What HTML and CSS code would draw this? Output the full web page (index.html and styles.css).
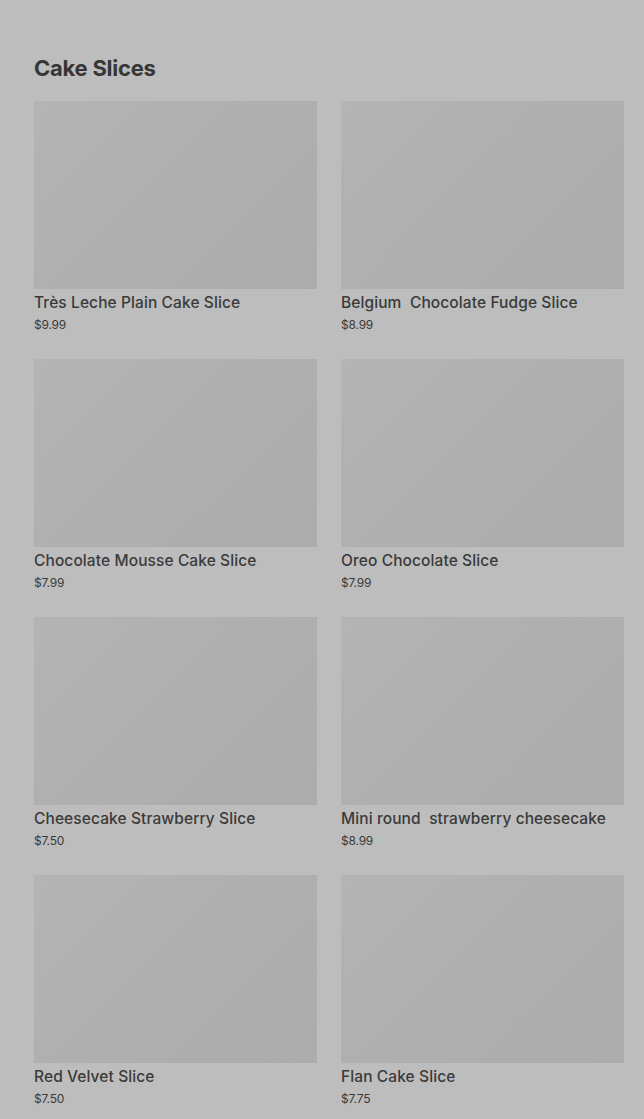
FILE: index.html
```html
<!DOCTYPE html>
<html lang="en">
<head>
<meta charset="UTF-8">
<meta name="viewport" content="width=device-width, initial-scale=1.0">
<title>Cake Slices</title>
<link rel="stylesheet" href="styles.css">
</head>
<body>

<section class="menu-section">
  <h2 class="section-title">Cake Slices</h2>
  <div class="item-grid">
    <div class="item">
      <div class="item-image"></div>
      <div class="item-name">Très Leche Plain Cake Slice</div>
      <div class="item-price">$9.99</div>
    </div>
    <div class="item">
      <div class="item-image"></div>
      <div class="item-name">Belgium&nbsp; Chocolate Fudge Slice</div>
      <div class="item-price">$8.99</div>
    </div>
    <div class="item">
      <div class="item-image"></div>
      <div class="item-name">Chocolate Mousse Cake Slice</div>
      <div class="item-price">$7.99</div>
    </div>
    <div class="item">
      <div class="item-image"></div>
      <div class="item-name">Oreo Chocolate Slice</div>
      <div class="item-price">$7.99</div>
    </div>
    <div class="item">
      <div class="item-image"></div>
      <div class="item-name">Cheesecake Strawberry Slice</div>
      <div class="item-price">$7.50</div>
    </div>
    <div class="item">
      <div class="item-image"></div>
      <div class="item-name">Mini round&nbsp; strawberry cheesecake</div>
      <div class="item-price">$8.99</div>
    </div>
    <div class="item">
      <div class="item-image"></div>
      <div class="item-name">Red Velvet Slice</div>
      <div class="item-price">$7.50</div>
    </div>
    <div class="item">
      <div class="item-image"></div>
      <div class="item-name">Flan Cake Slice</div>
      <div class="item-price">$7.75</div>
    </div>
  </div>
</section>

</body>
</html>
```

FILE: styles.css
```css
body, html {
  margin: 0;
  padding: 0;
  font-family: Inter, "Noto Sans", Arial, sans-serif;
  color: #3a3a3a;
  background-color: #bdbdbd; /* dimmed page */
}
.menu-section {
  padding: 52px 20px 0 34px;
}
.section-title {
  margin: 0 0 17px 0;
  font-size: 22px;
  line-height: 32px;
  font-weight: 700;
  letter-spacing: -0.25px;
  color: #363636;
}
.item-grid {
  display: grid;
  grid-template-columns: 283px 283px;
  column-gap: 24px;
  row-gap: 24px;
}
.item {
  display: flex;
  flex-direction: column;
  height: 234px;
}
.item-image {
  height: 188px;
  background: linear-gradient(135deg, #b4b4b4 0%, #afafaf 50%, #acacac 100%);
}
.item-name {
  font-size: 15.5px;
  line-height: 24px;
  font-weight: 500;
  letter-spacing: 0.1px;
  margin-top: 2px;
  white-space: nowrap;
}
.item-price {
  font-size: 12px;
  line-height: 20px;
  letter-spacing: -0.2px;
}
```
